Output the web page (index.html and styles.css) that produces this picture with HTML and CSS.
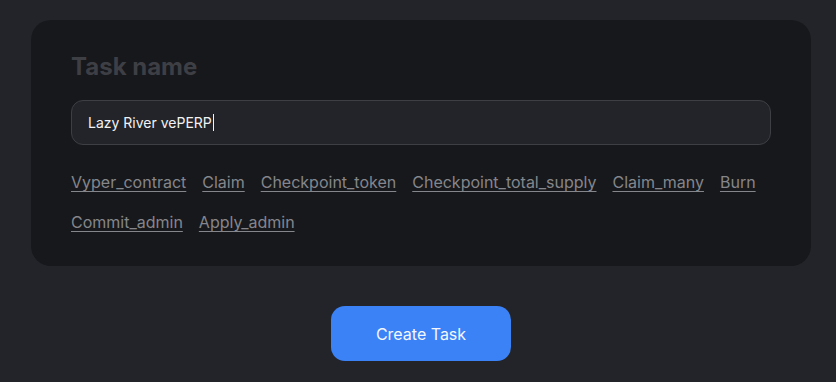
FILE: index.html
```html
<!DOCTYPE html>
<html lang="en">

<head>
    <meta charset="UTF-8">
    <meta name="viewport" content="width=device-width, initial-scale=1.0">
    <title>Create Task</title>

    <link rel="stylesheet" href="styles.css">
</head>

<body>
    <div class="page">
        <div class="card">
            <h2 class="card-title">Task name</h2>
            <div class="input-box">
                <span class="input-text">Lazy River vePERP</span><span class="caret"></span>
            </div>
            <div class="links">
                <a href="#" class="fn-link">Vyper_contract</a>
                <a href="#" class="fn-link">Claim</a>
                <a href="#" class="fn-link">Checkpoint_token</a>
                <a href="#" class="fn-link">Checkpoint_total_supply</a>
                <a href="#" class="fn-link">Claim_many</a>
                <a href="#" class="fn-link">Burn</a>
                <a href="#" class="fn-link">Commit_admin</a>
                <a href="#" class="fn-link">Apply_admin</a>
            </div>
        </div>
        <div class="dv-btn">
            <button class="create-btn" type="button">Create Task</button>
        </div>
    </div>
</body>

</html>
```

FILE: styles.css
```css
body {
    margin: 0;
    background: #232429;
    font-family: Inter, 'Noto Sans', sans-serif;
}

.page {
    width: 780px;
    padding: 20px 0 0 31px;
}

.card {
    background: #17181c;
    border-radius: 20px;
    padding: 32px 40px 24px 40px;
}

.card-title {
    margin: 0 0 18px 0;
    color: #3e3f45;
    font-size: 24px;
    font-weight: 700;
    line-height: 30px;
}

.input-box {
    display: flex;
    align-items: center;
    height: 43px;
    padding: 0 16px;
    background: #232429;
    border: 1px solid #3e3f44;
    border-radius: 12px;
}

.input-text {
    color: #f2f2f4;
    font-size: 14px;
}

.caret {
    display: inline-block;
    width: 1px;
    height: 17px;
    margin-left: 1px;
    background: #f2f2f4;
}

.links {
    display: flex;
    flex-wrap: wrap;
    column-gap: 16px;
    margin-top: 17px;
}

.fn-link {
    color: #85868b;
    font-size: 16px;
    line-height: 40px;
    text-underline-offset: 3px;
}

.dv-btn {
    display: flex;
    justify-content: center;
    margin-top: 40px;
}

.create-btn {
    width: 180px;
    height: 55px;
    border: none;
    border-radius: 14px;
    background: #3b82f6;
    color: #f4f7ff;
    font-family: Inter, 'Noto Sans', sans-serif;
    font-size: 16px;
}
```
